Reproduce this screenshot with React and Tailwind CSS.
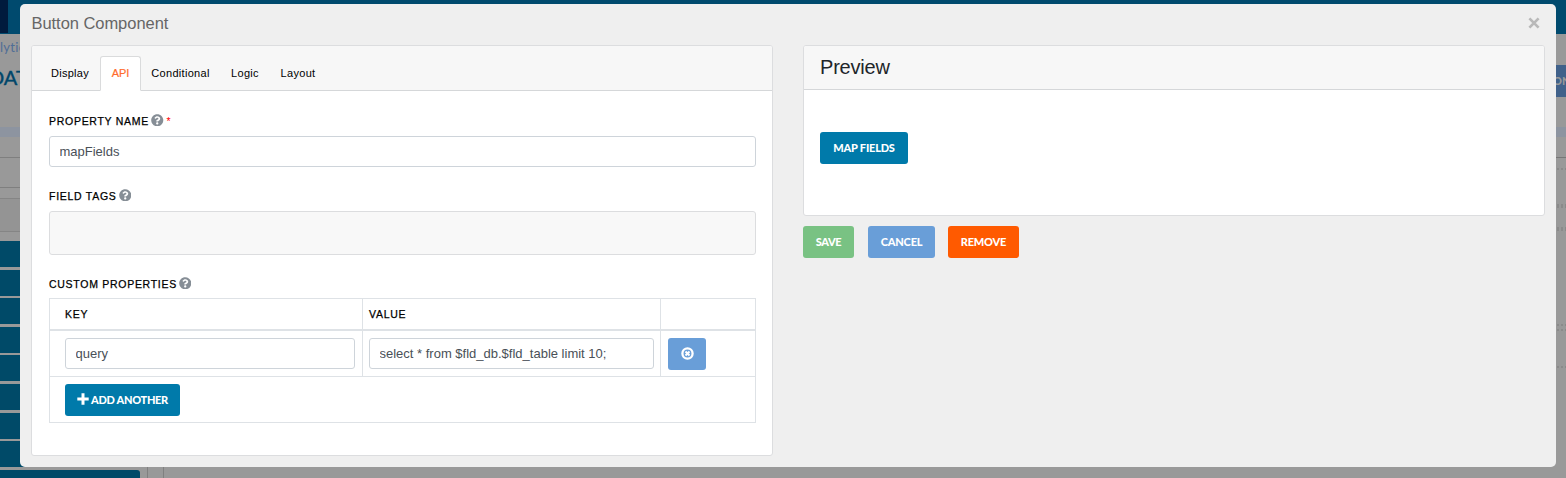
import { FaQuestionCircle } from "react-icons/fa";

const Help = () => <FaQuestionCircle className="-mt-[2px] ml-[2px] size-[12.5px] text-[#868e96]" />;

function Label({ children, required }) {
  return (
    <div className="flex h-3 items-center text-[10.5px] leading-3 tracking-[0.72px] text-black [-webkit-text-stroke:0.25px_black]">
      <span>{children}</span>
      <Help />
      {required && <span className="ml-[3px] text-[#f00] [-webkit-text-stroke:0]">*</span>}
    </div>
  );
}

function Button({ className, children }) {
  return (
    <button className={`flex h-8 items-center justify-center rounded-[3px] font-[Lato,sans-serif] text-[11px] font-black text-white ${className}`}>
      {children}
    </button>
  );
}

function Tab({ active, className, children }) {
  return (
    <div
      className={`h-[35px] text-center text-[11px] leading-4 ${
        active
          ? "rounded-t-[3px] border border-[#dadbdc] border-b-white bg-white pt-2 text-[#ff6c2c] [-webkit-text-stroke:0.2px_#ff6c2c]"
          : "border-b border-[#d5d7d9] pt-[9px] text-black"
      } ${className}`}
    >
      {children}
    </div>
  );
}

const inputClass =
  "block h-[31px] rounded-[3px] border border-[#ced4da] bg-white px-[9.5px] text-[13px] text-[#495057] outline-none";

function Dots({ className }) {
  return (
    <div className={`flex justify-end gap-[2px] overflow-hidden ${className}`}>
      <i className="w-[2px] shrink-0 bg-[#8a8a8a]" />
      <i className="w-[2px] shrink-0 bg-[#8a8a8a]" />
      <i className="w-px shrink-0 bg-[#8a8a8a]" />
    </div>
  );
}

function Backdrop() {
  return (
    <div className="flex h-[478px] flex-col bg-[#999]">
      <div className="h-[34px] shrink-0 bg-[#004a6e]">
        <div className="h-[33px] w-2 bg-[#001b3d]" />
      </div>
      <div className="flex h-[93px] shrink-0 justify-between">
        <div className="w-40 font-[Lato,sans-serif]">
          <div className="mt-[5px] text-[13px] leading-4 tracking-[0.3px] text-[#4f6d96]">lytics</div>
          <div className="-ml-[11px] mt-[9px] text-[20px] leading-[26px] text-[#00466a] [-webkit-text-stroke:0.4px_#00466a]">DATA</div>
        </div>
        <div className="mt-[31px] h-8 w-[10px] bg-[#40618a] text-[11px] leading-8 text-[#999]">
          <b className="-ml-[3px] block whitespace-nowrap font-[Lato,sans-serif] font-black">ON</b>
        </div>
      </div>
      <div className="h-[10px] shrink-0 bg-[#8d94a0]" />
      <div className="flex h-[341px] shrink-0 justify-between">
        <div className="w-[164px] border-r border-[#808080] pt-5">
          <div className="h-[31px] border-y border-[#7f7f7f]" />
          <div className="mt-[10px] h-[34px] border-y border-[#858585] bg-[#949494]" />
          <div className="mr-[15px] flex h-[246px] flex-col gap-[2.6px] overflow-hidden border-r border-[#808080] pr-[7px] pt-[9px]">
            {Array.from({ length: 9 }, (_, i) => (
              <div key={i} className="h-[26px] shrink-0 rounded-tr-[3px] bg-[#004a68]" />
            ))}
          </div>
        </div>
        <div className="w-[10px] pt-5">
          <div className="h-px bg-[#777]" />
          <Dots className="mt-[10px] h-[2px]" />
          <Dots className="mt-[34px] h-1" />
          <Dots className="mt-[19px] h-1" />
          <Dots className="mt-[93px] h-[2px]" />
          <Dots className="mt-[3px] h-[2px]" />
          <Dots className="mt-[35px] h-[2px]" />
        </div>
      </div>
    </div>
  );
}

export default function App() {
  return (
    <div className="relative h-[478px] w-[1566px] overflow-hidden font-['Liberation_Sans',sans-serif]">
      <Backdrop />
      <div className="absolute left-5 top-1 h-[463px] w-[1536px] rounded-[5px] bg-[#efefef] px-[11px]">
        <div className="flex h-[41px] items-start justify-between">
          <h1 className="pl-[0.5px] pt-[10px] text-[16.5px] leading-[19px] tracking-[-0.05px] text-[#666]">Button Component</h1>
          <svg className="mr-[5px] mt-[13px] size-3" viewBox="0 0 12 12" fill="none" stroke="#b9b9b9" strokeWidth="2.7">
            <path d="M1.4 1.4 10.6 10.6M10.6 1.4 1.4 10.6" />
          </svg>
        </div>
        <div className="flex items-start gap-[30px]">
          <section className="h-[411px] w-[742px] overflow-hidden rounded-[3px] border border-[#dcdddf] bg-white">
            <div className="flex h-[45px] items-end bg-[#f7f7f7]">
              <div className="h-px w-2 bg-[#d5d7d9]" />
              <Tab className="w-[60px] tracking-[0.3px]">Display</Tab>
              <Tab active className="w-[41px]">API</Tab>
              <Tab className="w-[79px] tracking-[0.3px]">Conditional</Tab>
              <Tab className="w-[50px] tracking-[0.3px]">Logic</Tab>
              <Tab className="w-[56px] tracking-[0.3px]">Layout</Tab>
              <div className="h-px grow bg-[#d5d7d9]" />
            </div>
            <div className="pl-[17px] pr-4 pt-6">
              <Label required>PROPERTY NAME</Label>
              <input className={`${inputClass} mt-[9px] w-full`} defaultValue="mapFields" />
              <div className="mt-[23px]"><Label>FIELD TAGS</Label></div>
              <div className="mt-[9px] h-11 rounded-[3px] border border-[#dcdddf] bg-[#f8f8f8]" />
              <div className="mt-[23px]"><Label>CUSTOM PROPERTIES</Label></div>
              <div className="mt-[8px] h-[125px] border border-[#dee2e6]">
                <div className="grid h-[32px] grid-cols-[313px_298px_1fr] border-b-2 border-[#dee2e6] text-[10.5px] leading-[31px] tracking-[0.72px] text-black [-webkit-text-stroke:0.25px_black]">
                  <div className="border-r border-[#dee2e6] pl-[15px]">KEY</div>
                  <div className="border-r border-[#dee2e6] pl-[6px]">VALUE</div>
                  <div />
                </div>
                <div className="grid h-[46px] grid-cols-[313px_298px_1fr] border-b border-[#dee2e6]">
                  <div className="border-r border-[#dee2e6] pl-[15px] pr-[7px] pt-[7px]">
                    <input className={`${inputClass} w-full`} defaultValue="query" />
                  </div>
                  <div className="border-r border-[#dee2e6] pl-[6px] pr-[6px] pt-[7px]">
                    <input className={`${inputClass} w-full`} defaultValue="select * from $fld_db.$fld_table limit 10;" />
                  </div>
                  <div className="pl-[7px] pt-[7px]">
                    <Button className="w-[38px] bg-[#699ed8]">
                      <svg className="-mt-[2px] size-[13px]" viewBox="0 0 13 13" fill="none" stroke="currentColor">
                        <circle cx="6.5" cy="6.5" r="5.1" strokeWidth="2.3" />
                        <path d="m4.5 4.5 4 4m0-4-4 4" strokeWidth="2" />
                      </svg>
                    </Button>
                  </div>
                </div>
                <div className="pl-[15px] pt-[7px]">
                  <Button className="w-[115px] bg-[#007aaa]">
                    <svg className="-mt-[3px] mr-[2px] size-3" viewBox="0 0 12 12" fill="none" stroke="currentColor" strokeWidth="3">
                      <path d="M0.3 6H11.7M6 0.3V11.7" />
                    </svg>
                    <span className="tracking-[-0.3px]">ADD ANOTHER</span>
                  </Button>
                </div>
              </div>
            </div>
          </section>
          <div className="w-[742px]">
            <section className="h-[171px] overflow-hidden rounded-[3px] border border-[#dcdddf] bg-white">
              <h2 className="h-11 border-b border-[#d5d7d9] bg-[#f7f7f7] pl-4 pt-[9px] text-xl leading-6 tracking-[-0.2px] text-[#212529]">Preview</h2>
              <div className="pl-4 pt-[42px]">
                <Button className="w-[88px] bg-[#007aaa] tracking-[-0.2px]">MAP FIELDS</Button>
              </div>
            </section>
            <div className="mt-[10px] flex">
              <Button className="w-[51px] bg-[#79c283] tracking-[-0.4px]">SAVE</Button>
              <Button className="ml-[14px] w-[67px] bg-[#699ed8] tracking-[-0.2px]">CANCEL</Button>
              <Button className="ml-[13px] w-[71px] bg-[#ff5a00] tracking-[-0.2px]">REMOVE</Button>
            </div>
          </div>
        </div>
      </div>
    </div>
  );
}
